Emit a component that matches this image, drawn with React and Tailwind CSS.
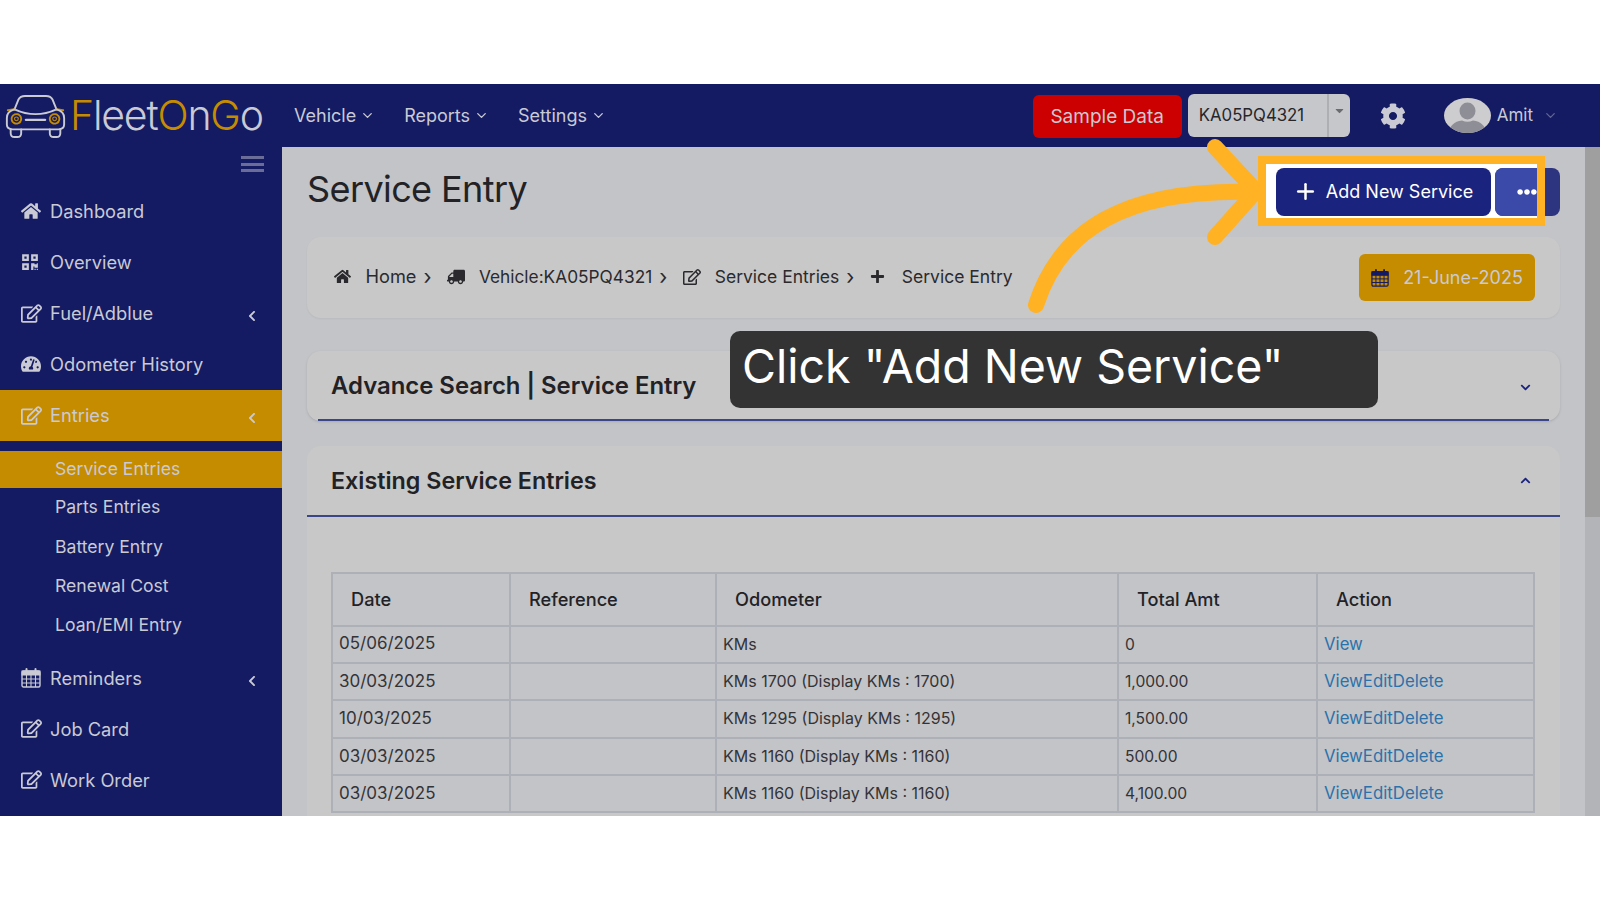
import React from 'react';
import {
  FaHome, FaQrcode, FaRegEdit, FaTachometerAlt, FaCog, FaTruck, FaPlus, FaEllipsisH,
  FaChevronLeft, FaChevronDown, FaChevronUp, FaCaretDown,
} from 'react-icons/fa';
import { ChevronDown, Plus } from 'lucide-react';

const rows = [
  ['05/06/2025', 'KMs', '0', 'View'],
  ['30/03/2025', 'KMs 1700 (Display KMs : 1700)', '1,000.00', 'ViewEditDelete'],
  ['10/03/2025', 'KMs 1295 (Display KMs : 1295)', '1,500.00', 'ViewEditDelete'],
  ['03/03/2025', 'KMs 1160 (Display KMs : 1160)', '500.00', 'ViewEditDelete'],
  ['03/03/2025', 'KMs 1160 (Display KMs : 1160)', '4,100.00', 'ViewEditDelete'],
];

function CarLogo() {
  return (
    <svg viewBox="0 0 66 46" className="w-[63px] h-[46px] shrink-0" fill="none" stroke="#c9cad4" strokeWidth="2" strokeLinecap="round">
      <path d="M11 16 L15 6 Q17 2 22 2 H44 Q49 2 51 6 L55 16" />
      <path d="M11 16 Q33 26 55 16" />
      <path d="M4 17 L11 16 M55 16 L62 17" stroke="#c68c00" />
      <path d="M11 16 Q3 18 3 25 V32 Q3 37 9 37 H57 Q63 37 63 32 V25 Q63 18 55 16" />
      <path d="M7 37 V41 Q7 45 11 45 H14 Q18 45 18 41 V37 M48 37 V41 Q48 45 52 45 H55 Q59 45 59 41 V37" />
      <path d="M23 27 H43" strokeWidth="2.5" />
      <circle cx="13" cy="26" r="5" stroke="#c68c00" strokeDasharray="2 1" />
      <circle cx="13" cy="26" r="2" stroke="#c68c00" strokeWidth="1.2" />
      <circle cx="53" cy="26" r="5" stroke="#c68c00" strokeDasharray="2 1" />
      <circle cx="53" cy="26" r="2" stroke="#c68c00" strokeWidth="1.2" />
    </svg>
  );
}

function Avatar() {
  return (
    <svg viewBox="0 0 47 35" className="w-[47px] h-[35px] shrink-0">
      <defs>
        <clipPath id="av">
          <ellipse cx="23.5" cy="17.5" rx="23.5" ry="17.5" />
        </clipPath>
      </defs>
      <ellipse cx="23.5" cy="17.5" rx="23.5" ry="17.5" fill="#cdcdcf" />
      <g clipPath="url(#av)" fill="#8e8f96">
        <ellipse cx="23.5" cy="13" rx="8" ry="8.5" />
        <path d="M5 35 Q6 24 18 22.5 Q23.5 25 29 22.5 Q41 24 42 35 Z" />
      </g>
    </svg>
  );
}

function CalendarIcon({ size = 20, className = '' }) {
  return (
    <svg viewBox="0 0 20 20" width={size} height={size} className={className} fill="none" stroke="currentColor">
      <rect x="1" y="3" width="18" height="16" rx="1.5" strokeWidth="1.4" />
      <rect x="1" y="3" width="18" height="4" fill="currentColor" strokeWidth="1" />
      <path d="M5.5 1 V5 M14.5 1 V5" strokeWidth="2" strokeLinecap="round" />
      <path d="M1 11 H19 M1 15 H19 M5.5 7 V19 M10 7 V19 M14.5 7 V19" strokeWidth="1.1" />
    </svg>
  );
}

function NavLink({ label }) {
  return (
    <div className="flex items-center gap-[4px] text-[18px] text-[#c9cad4] -mt-[1px]">
      {label}
      <ChevronDown size={15} strokeWidth={2.2} />
    </div>
  );
}

function SideItem({ icon: Icon, label, arrow, active, size = 20 }) {
  return (
    <div className={`h-[51px] flex items-center pl-[21px] pr-[24px] text-[18.3px] text-[#c9cad4] ${active ? 'bg-[#c68c00]' : ''}`}>
      <span className="w-[29px] shrink-0">
        <Icon size={size} />
      </span>
      <span className="flex-1 pt-[2px]">{label}</span>
      {arrow && <FaChevronLeft size={12} className="mt-[6px]" />}
    </div>
  );
}

function SubItem({ label, active }) {
  return (
    <div className={`flex items-center pl-[55px] pt-[1px] text-[17.6px] text-[#c9cad4] ${active ? 'h-[37px] bg-[#c68c00]' : 'h-[39.2px]'}`}>
      {label}
    </div>
  );
}

function Crumb({ icon: Icon, label, last, flip, size = 17, text = 'text-[18.2px]' }) {
  return (
    <div className={`flex items-center text-[#2a2a2e] ${text}`}>
      <span className="w-[31.5px] shrink-0">
        <Icon size={size} className={flip ? '-scale-x-100' : ''} />
      </span>
      <span>{label}</span>
      {!last && <span className="ml-[7px] mr-[15px] w-[9px] text-[21px] leading-none">›</span>}
    </div>
  );
}

export default function App() {
  return (
    <div className="w-[1600px] h-[900px] bg-white overflow-hidden font-[family-name:Inter,sans-serif]">
      <div className="h-[84px]" />
      <div className="relative h-[731.5px] overflow-hidden flex flex-col bg-[#c3c4c7]">
        {/* top bar */}
        <header className="h-[63px] shrink-0 bg-[#141b63] flex items-center">
          <div className="w-[294px] shrink-0 flex items-center pl-[4px] gap-[3px]">
            <CarLogo />
            <div className="text-[41px] font-light leading-none tracking-[-1.2px] text-[#c9cad4]">
              <span className="text-[#c68c00]">F</span>leet<span className="text-[#c68c00]">O</span>n<span className="text-[#c68c00]">G</span>o
            </div>
          </div>
          <div className="flex items-center gap-[29px]">
            <NavLink label="Vehicle" />
            <NavLink label="Reports" />
            <NavLink label="Settings" />
          </div>
          <div className="ml-auto flex items-center pr-[42px]">
            <button className="w-[149px] h-[43px] rounded-[6px] bg-[#cc0000] text-[19px] text-[#c9cad4] mt-[2px] pt-[1px]">Sample Data</button>
            <div className="ml-[6px] w-[162px] h-[43px] rounded-[6px] bg-[#c6c7ca] flex items-center text-[16.8px] text-[#26262a]">
              <span className="flex-1 pl-[11px]">KA05PQ4321</span>
              <span className="w-[23px] h-full border-l-2 border-[#aeafb3] flex justify-center pt-[10px] text-[#6b6c72]">
                <FaCaretDown size={13} />
              </span>
            </div>
            <FaCog size={26} className="ml-[30px] text-[#c9cad4]" />
            <div className="ml-[38px]">
              <Avatar />
            </div>
            <span className="ml-[6px] text-[17px] text-[#c9cad4]">Amit</span>
            <ChevronDown size={15} className="ml-[10px] text-[#63678f]" />
          </div>
        </header>

        <div className="flex-1 flex min-h-0">
          {/* sidebar */}
          <aside className="w-[282px] shrink-0 bg-[#141b63] flex flex-col">
            <div className="h-[38.5px] flex justify-end pr-[18px] pt-[9px]">
              <div className="w-[23px] flex flex-col gap-[3.5px]">
                <div className="h-[3px] bg-[#696d97]" />
                <div className="h-[3px] bg-[#696d97]" />
                <div className="h-[3px] bg-[#696d97]" />
              </div>
            </div>
            <SideItem icon={FaHome} label="Dashboard" />
            <SideItem icon={FaQrcode} label="Overview" size={18} />
            <SideItem icon={FaRegEdit} label="Fuel/Adblue" arrow size={21} />
            <SideItem icon={FaTachometerAlt} label="Odometer History" />
            <SideItem icon={FaRegEdit} label="Entries" arrow active size={21} />
            <div className="mt-[10px] mb-[8px]">
              <SubItem label="Service Entries" active />
              <SubItem label="Parts Entries" />
              <SubItem label="Battery Entry" />
              <SubItem label="Renewal Cost" />
              <SubItem label="Loan/EMI Entry" />
            </div>
            <SideItem icon={CalendarIcon} label="Reminders" arrow />
            <SideItem icon={FaRegEdit} label="Job Card" size={21} />
            <SideItem icon={FaRegEdit} label="Work Order" size={21} />
          </aside>

          {/* main */}
          <main className="flex-1 min-w-0 px-[25px]">
            <div className="h-[69px] flex items-end justify-between">
              <h1 className="text-[36px] leading-[48px] text-[#222226] tracking-[-0.6px] relative -top-[3px]">Service Entry</h1>
              <div className="flex gap-[4.5px] relative z-10">
                <div className="absolute -left-[9.5px] -top-[4px] w-[271px] h-[54px] bg-white -z-10" />
                <button className="w-[215px] h-[48px] rounded-[8px] bg-[#1a237e] text-white text-[18px] pb-[1px] flex items-center justify-center gap-[8px]">
                  <Plus size={25} strokeWidth={2.4} />
                  Add New Service
                </button>
                <button className="w-[65px] h-[48px] rounded-[8px] bg-[#2d3580] overflow-hidden">
                  <span className="w-[41.5px] h-full bg-[#3b4aa8] text-white flex items-center justify-end">
                    <FaEllipsisH size={20} />
                  </span>
                </button>
              </div>
            </div>

            <div className="mt-[21px] h-[81px] rounded-[14px] bg-[#c8c8c8] shadow-xs flex items-center justify-between pl-[27px] pr-[25px]">
              <div className="flex items-center -mt-[1px]">
                <Crumb icon={FaHome} label="Home" />
                <Crumb icon={FaTruck} label="Vehicle:KA05PQ4321" flip size={18} text="text-[17.3px]" />
                <Crumb icon={FaRegEdit} label="Service Entries" size={18} text="text-[17.5px]" />
                <Crumb icon={FaPlus} label="Service Entry" last size={15} text="text-[17.5px]" />
              </div>
              <div className="w-[176px] h-[47px] rounded-[6px] bg-[#c68c00] flex items-center justify-center gap-[14px] text-[18px] text-[#c9cad4]">
                <CalendarIcon size={18} className="text-[#141b63]" />
                21-June-2025
              </div>
            </div>

            <div className="mt-[33px] h-[70px] rounded-[14px] bg-[#c8c8c8] shadow-sm flex flex-col">
              <div className="flex-1 flex items-center justify-between pl-[24px] pr-[29px]">
                <div className="text-[23.9px] font-semibold text-[#222226] pt-[1px]">Advance Search | Service Entry</div>
                <FaChevronDown size={11} className="text-[#1a237e] mt-[4px]" />
              </div>
              <div className="mx-[11px] h-[2px] bg-[#3b4689]" />
            </div>

            <div className="mt-[25px] rounded-t-[14px] bg-[#c8c8c8] h-[400px]">
              <div className="h-[71px] border-b-2 border-[#3b4689] flex items-center justify-between pl-[24px] pr-[29px]">
                <div className="text-[23.3px] font-semibold text-[#222226] pt-[1px]">Existing Service Entries</div>
                <FaChevronUp size={11} className="text-[#1a237e]" />
              </div>
              <div className="pt-[55px] pl-[24px]">
                <table className="w-[1202px] table-fixed border-collapse bg-[#c3c4c7]">
                  <colgroup>
                    <col className="w-[178px]" />
                    <col className="w-[206px]" />
                    <col className="w-[402px]" />
                    <col className="w-[199px]" />
                    <col className="w-[217px]" />
                  </colgroup>
                  <thead>
                    <tr className="h-[52.5px]">
                      {['Date', 'Reference', 'Odometer', 'Total Amt', 'Action'].map((h) => (
                        <th key={h} className="border-2 border-[#aeb0b7] pl-[18px] text-left text-[18.2px] font-medium text-[#222226]">
                          {h}
                        </th>
                      ))}
                    </tr>
                  </thead>
                  <tbody className="text-[#333337]">
                    {rows.map((r, i) => (
                      <tr key={i} className="h-[37.4px]">
                        <td className="border-2 border-[#aeb0b7] pl-[6px] text-[17px]">{r[0]}</td>
                        <td className="border-2 border-[#aeb0b7]" />
                        <td className="border-2 border-[#aeb0b7] pl-[6px] text-[16px] pb-[1px]">{r[1]}</td>
                        <td className="border-2 border-[#aeb0b7] pl-[6px] text-[15.6px]">{r[2]}</td>
                        <td className="border-2 border-[#aeb0b7] pl-[6px] text-[16.8px] text-[#2a72ab]">{r[3]}</td>
                      </tr>
                    ))}
                  </tbody>
                </table>
              </div>
            </div>
          </main>

          {/* scrollbar */}
          <div className="w-[15px] shrink-0 bg-[#b3b4b8]">
            <div className="h-[370px] bg-[#9f9f9f]" />
          </div>
        </div>

        {/* tutorial highlight and arrow */}
        <div className="absolute left-[1258px] top-[72px] w-[287px] h-[70px] border-[8px] border-[#ffb224] pointer-events-none z-20" />
        <svg className="absolute left-0 top-0 w-[1600px] h-[731px] pointer-events-none z-20" viewBox="0 84 1600 731" fill="none" stroke="#ffb224" strokeWidth="16" strokeLinecap="round" strokeLinejoin="round">
          <path d="M1036 305 C1060 230 1125 188 1255 192" />
          <path d="M1215 147 L1256 191 L1215 237" />
        </svg>
        <div className="absolute left-[730px] top-[247px] w-[648px] h-[77px] rounded-[10px] bg-[#333333] text-white text-[46.5px] leading-[70px] pl-[12px] z-20">
          Click "Add New Service"
        </div>
      </div>
    </div>
  );
}
